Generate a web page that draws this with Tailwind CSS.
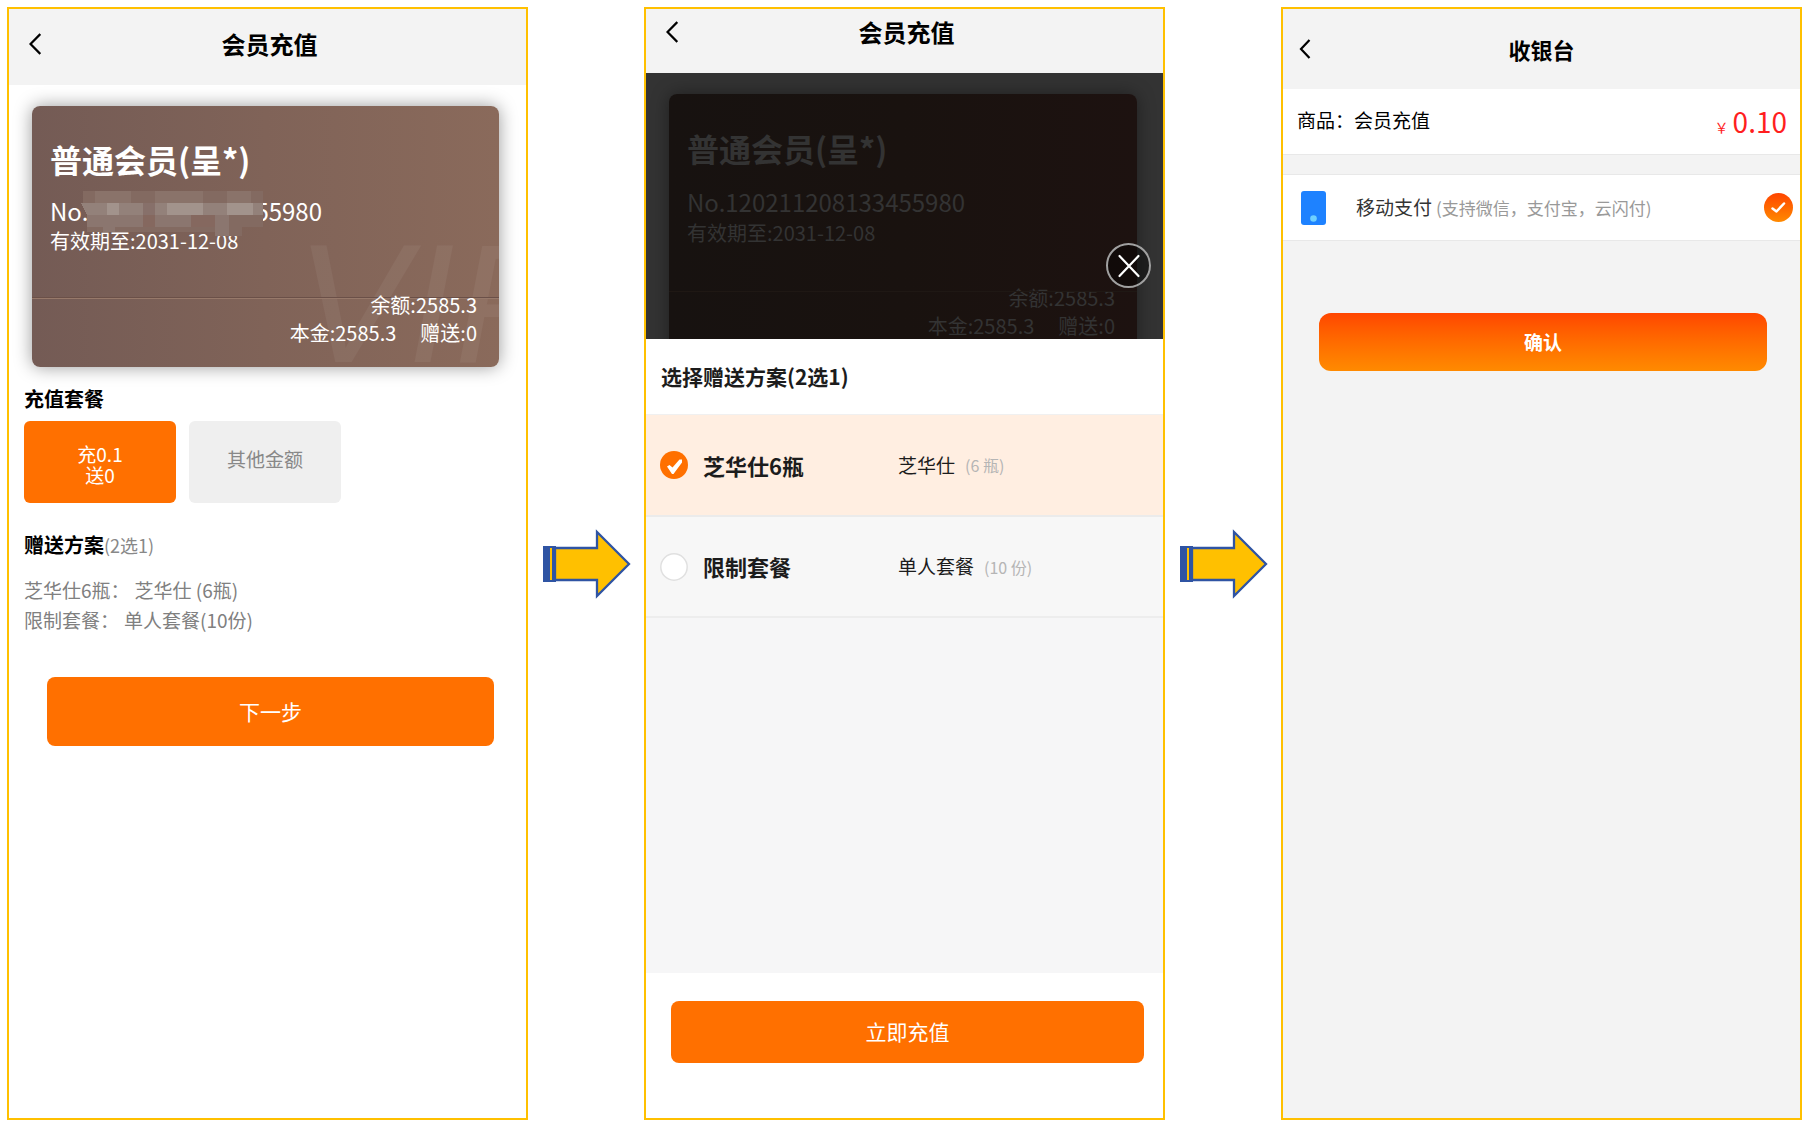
<!DOCTYPE html>
<html lang="zh-CN">
<head>
<meta charset="utf-8">
<meta name="viewport" content="width=device-width, initial-scale=1">
<title>会员充值</title>
<script src="https://cdn.jsdelivr.net/npm/@tailwindcss/browser@4"></script>
</head>
<body class="bg-white font-['Noto_Sans_CJK_SC',sans-serif] text-black">
<div class="flex min-h-screen pt-[7px] pr-[9px] pb-[9px] pl-[7px]">

  <!-- Step 1: choose a package -->
  <main class="flex min-w-0 flex-1 flex-col border-2 border-[#ffc000] bg-white">
    <header class="flex h-[76px] items-center bg-[#f3f3f3] pr-4 pb-[6px] pl-5">
      <button class="w-8" aria-label="返回"><svg class="h-6 w-3" viewBox="0 0 12 24" fill="none" stroke="#000" stroke-width="2.300"><path d="M11.300 2 1.500 12l9.800 10"/></svg></button>
      <h1 class="flex-1 text-center text-2xl font-bold">会员充值</h1>
      <span class="w-8"></span>
    </header>

    <section class="relative mt-[21px] mr-[27px] ml-[23px] h-[261px] overflow-hidden rounded-lg bg-linear-to-r from-[#745b55] via-[#806358] to-[#8a6a5b] pt-[30px] pr-[22px] pl-[18px] text-white shadow-[0_0_18px_rgba(0,0,0,0.4)]">
      <span class="absolute top-[104px] left-[264px] font-['Liberation_Sans',sans-serif] text-[168px] leading-[188px] text-white/5 italic select-none" aria-hidden="true">VIP</span>
      <span class="absolute inset-x-0 top-[191px] h-[2px] border-t border-b border-t-[#6b5048] border-b-[#97796a]"></span>
      <div class="relative">
        <h2 class="text-[32px] leading-[46px] font-bold">普通会员(呈*)</h2>
        <p class="mt-[13px] flex w-[272px] justify-between text-2xl leading-8"><span>No.</span><span>55980</span></p>
        <p class="text-xl leading-7">有效期至:2031-12-08</p>
        <svg class="absolute top-[55px] left-[17px] h-[45px] w-[196px]" viewBox="0 0 196 45" shape-rendering="crispEdges" aria-hidden="true">
          <path fill="#836a61" d="M16 0h180v36h-21v9h-24v-4H20V24L14 12h2z"/>
          <path fill="#8a736a" d="M28 0h36v12H28zM88 0h48v12H88zM160 0h24v12h-24z"/>
          <path fill="#93817a" d="M14 12h182v12H20z"/>
          <path fill="#a2938c" d="M40 12h12v12H40zM100 12h36v12h-36zM160 12h26v12h-26z"/>
          <path fill="#87706a" d="M76 12h12v12H76z"/>
          <path fill="#8b766f" d="M20 24h56v12H20zM88 24h36v12H88zM148 24h14v21h-14zM36 36h12v5H36z"/>
          <path fill="#85685f" d="M76 24h12v12H76zM124 24h24v12h-24z"/>
        </svg>
      </div>
      <p class="relative mt-9 text-right text-xl leading-7">余额:2585.3</p>
      <p class="relative flex justify-end gap-6 text-xl leading-7"><span>本金:2585.3</span><span>赠送:0</span></p>
    </section>

    <section class="px-[15px] pt-4">
      <h2 class="text-xl leading-8 font-bold">充值套餐</h2>
      <div class="mt-[6px] flex gap-[13px]">
        <button class="h-[82px] w-[152px] rounded-md bg-[#ff7000] pt-1 text-[19px] leading-[21px] text-white">充0.1<br>送0</button>
        <button class="h-[82px] w-[152px] rounded-md bg-[#efefef] pb-2 text-[19px] leading-[21px] text-[#888]">其他金额</button>
      </div>
      <h2 class="mt-7 text-xl leading-7 font-bold">赠送方案<span class="text-lg font-normal text-[#888]">(2选1)</span></h2>
      <dl class="mt-4 text-[19px] leading-[30px] text-[#808080]">
        <div class="flex gap-[5px]"><dt>芝华仕6瓶：</dt><dd>芝华仕 (6瓶)</dd></div>
        <div class="flex gap-[5px]"><dt>限制套餐：</dt><dd>单人套餐(10份)</dd></div>
      </dl>
    </section>
    <button class="mt-[42px] mr-8 ml-[38px] h-[69px] rounded-lg bg-[#ff7000] text-[21px] text-white">下一步</button>
  </main>

  <div class="flex w-[116px] items-center justify-center pl-1">
    <svg class="h-[72px] w-[90px]" viewBox="0 0 90 72" aria-hidden="true"><path fill="#2f54a3" d="M0 18h9v36H0z"/><path fill="#ffc000" d="M7 20h2v32H7z"/><path fill="#ffc000" stroke="#2f54a3" stroke-width="2.300" d="M12 20h42V4l32 32-32 32V52H12z"/><path fill="#2f54a3" d="M9 18h4v36H9z"/></svg>
  </div>

  <!-- Step 2: choose a gift plan -->
  <main class="flex min-w-0 flex-1 flex-col border-2 border-[#ffc000] bg-[#f6f6f7]">
    <header class="flex h-16 items-center bg-[#f3f3f3] pr-4 pb-[18px] pl-5">
      <button class="w-8" aria-label="返回"><svg class="h-6 w-3" viewBox="0 0 12 24" fill="none" stroke="#000" stroke-width="2.300"><path d="M11.300 2 1.500 12l9.800 10"/></svg></button>
      <h1 class="flex-1 text-center text-2xl font-bold">会员充值</h1>
      <span class="w-8"></span>
    </header>

    <div class="relative h-[266px] overflow-hidden bg-[#333] pt-[21px] pr-[26px] pl-[23px]">
      <section class="relative h-[270px] overflow-hidden rounded-lg bg-linear-to-r from-[#171210] via-[#19120f] to-[#1d1210] pt-[31px] pr-[22px] pl-[18px] text-[#333] shadow-[0_0_18px_rgba(0,0,0,0.4)]">
        <span class="absolute inset-x-0 top-[197px] h-px bg-[#1f1814]"></span>
        <h2 class="text-[32px] leading-[46px] font-bold">普通会员(呈*)</h2>
        <p class="mt-[15px] text-2xl leading-8">No.120211208133455980</p>
        <p class="text-xl leading-[30px]">有效期至:2031-12-08</p>
        <p class="mt-9 text-right text-xl leading-7">余额:2585.3</p>
        <p class="flex justify-end gap-6 text-xl leading-7"><span>本金:2585.3</span><span>赠送:0</span></p>
      </section>
      <button class="absolute right-3 bottom-[51px] flex size-[45px] items-center justify-center rounded-full border-2 border-[#a0a0a0] bg-black/40" aria-label="关闭"><svg class="size-6" viewBox="0 0 24 24" stroke="#fff" stroke-width="2.200" stroke-linecap="round"><path d="M2.500 2 21.500 22M21.500 2 2.500 22"/></svg></button>
    </div>

    <h2 class="flex h-[76px] items-center border-b border-[#f0f0f0] bg-white pl-[15px] text-[21px] font-bold text-[#1c1c1c]">选择赠送方案(2选1)</h2>
    <label class="flex h-[102px] items-center border-b-2 border-[#ebebeb] bg-[#ffeee1] pl-[14px] text-[#1c1c1c]">
      <input type="radio" name="plan" checked class="peer sr-only">
      <svg class="size-7" viewBox="0 0 28 28" aria-hidden="true"><circle cx="14" cy="14" r="14" fill="#ff7000"/><path fill="#fff" d="M7 15.500 9.500 14l3 2.500 7-8h2.500v3l-8.500 11.500h-1.500z"/></svg>
      <span class="ml-[15px] w-[195px] text-[22px] font-bold">芝华仕6瓶</span>
      <span class="text-[19px]">芝华仕</span><span class="ml-[10px] text-base text-[#b5b5b5]">(6 瓶)</span>
    </label>
    <label class="flex h-[101px] items-center border-b-2 border-[#ededed] bg-[#f7f7f7] pl-[14px] text-[#1c1c1c]">
      <input type="radio" name="plan" class="peer sr-only">
      <svg class="size-7" viewBox="0 0 28 28" aria-hidden="true"><circle cx="14" cy="14" r="13.200" fill="#fff" stroke="#e0e0e0" stroke-width="1.500"/></svg>
      <span class="ml-[15px] w-[195px] text-[22px] font-bold">限制套餐</span>
      <span class="text-[19px]">单人套餐</span><span class="ml-[10px] text-base text-[#b5b5b5]">(10 份)</span>
    </label>
    <footer class="mt-auto flex bg-white pt-7 pr-[19px] pb-[55px] pl-[25px]">
      <button class="h-[62px] flex-1 rounded-lg bg-[#ff7000] text-[21px] text-white">立即充值</button>
    </footer>
  </main>

  <div class="flex w-[116px] items-center justify-center pl-1">
    <svg class="h-[72px] w-[90px]" viewBox="0 0 90 72" aria-hidden="true"><path fill="#2f54a3" d="M0 18h9v36H0z"/><path fill="#ffc000" d="M7 20h2v32H7z"/><path fill="#ffc000" stroke="#2f54a3" stroke-width="2.300" d="M12 20h42V4l32 32-32 32V52H12z"/><path fill="#2f54a3" d="M9 18h4v36H9z"/></svg>
  </div>

  <!-- Step 3: checkout -->
  <main class="flex min-w-0 flex-1 flex-col border-2 border-[#ffc000] bg-[#f3f3f3]">
    <header class="flex h-20 items-center pr-4 pl-4">
      <button class="w-8" aria-label="返回"><svg class="h-5 w-3" viewBox="0 0 12 20" fill="none" stroke="#000" stroke-width="2.200"><path d="M10.500 1 2 10l8.500 9"/></svg></button>
      <h1 class="flex-1 text-center text-[22px] font-bold">收银台</h1>
      <span class="w-8"></span>
    </header>
    <section class="flex h-[66px] items-center border-b border-[#e8e8e8] bg-white pr-[13px] pb-[2px] pl-[14px] text-[19px]">
      <span>商品：会员充值</span>
      <span class="ml-auto flex items-baseline text-[#ff1f1f]"><span class="text-sm">￥</span><span class="ml-1 text-[28px] leading-8">0.10</span></span>
    </section>
    <label class="mt-[19px] flex h-[67px] items-center border-y border-[#e8e8e8] bg-white pr-[7px] pl-[18px] text-[19px] text-[#333]">
      <input type="radio" name="pay" checked class="sr-only">
      <svg class="h-[34px] w-[25px]" viewBox="0 0 25 34" aria-hidden="true"><rect width="25" height="34" rx="3" fill="#1e82ff"/><circle cx="12.500" cy="27.500" r="3.300" fill="#6fd0ff"/></svg>
      <span class="ml-[30px]">移动支付</span><span class="ml-1 text-[17px] text-[#999]">(支持微信，支付宝，云闪付)</span>
      <svg class="ml-auto size-[29px]" viewBox="0 0 29 29" aria-hidden="true"><defs><linearGradient id="pay" x2="0" y2="1"><stop stop-color="#ff4500"/><stop offset="1" stop-color="#ff8a00"/></linearGradient></defs><circle cx="14.500" cy="14.500" r="14.500" fill="url(#pay)"/><path d="m8.500 15.500 4 3 7.500-8" fill="none" stroke="#fff" stroke-width="2.500" stroke-linecap="round" stroke-linejoin="round"/></svg>
    </label>
    <button class="mt-[72px] mr-[33px] ml-9 h-[58px] rounded-xl bg-linear-to-b from-[#ff4500] to-[#ff8a00] text-[19px] font-bold text-white">确认</button>
  </main>
</div>
</body>
</html>
